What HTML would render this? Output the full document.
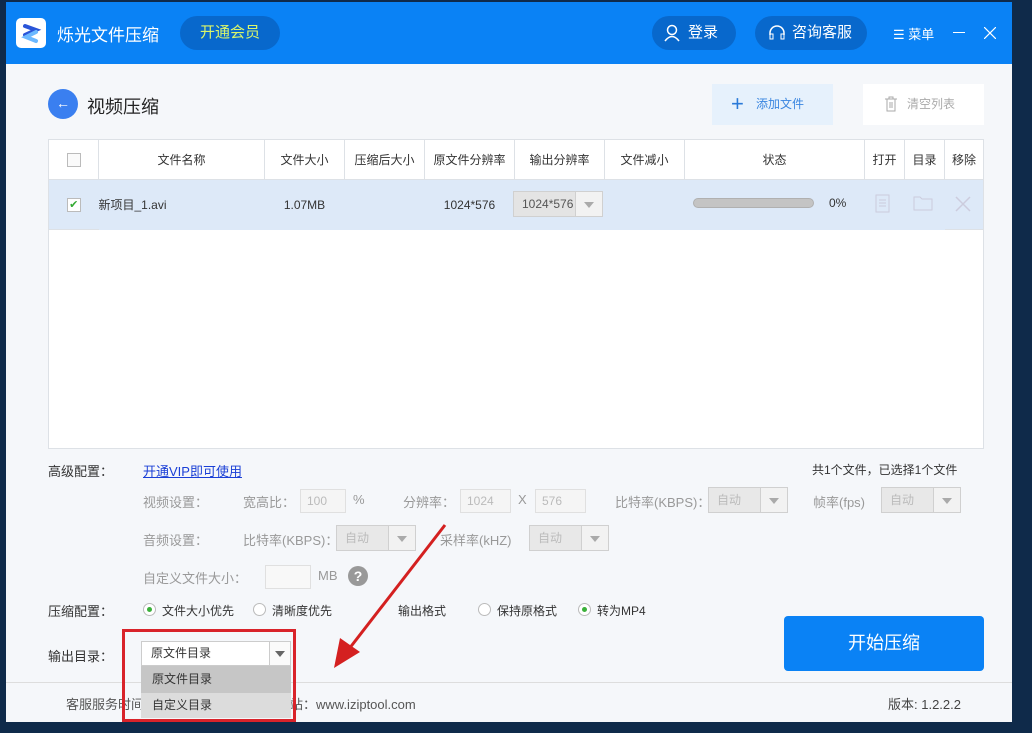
<!DOCTYPE html><html><head><meta charset="utf-8"><style>
*{box-sizing:border-box;margin:0;padding:0}
body{width:1032px;height:733px;overflow:hidden;background:#0f2a4a;font-family:"Liberation Sans","Noto Sans CJK SC",sans-serif;font-size:13px;color:#333;position:relative}
.a{position:absolute}
.win{left:6px;top:2px;width:1006px;height:720px;background:#f5f7fa}
.tb{left:6px;top:2px;width:1006px;height:62px;background:#0a82f5}
.pill{background:#0868cc;border-radius:17px;height:34px;color:#fff;font-size:15px;line-height:34px;text-align:center}
table{border-collapse:collapse;position:absolute;left:48px;top:139px;width:936px;background:#fff}
td{border:1px solid #dde1e6;text-align:center;font-size:12px;color:#333}
.g{color:#999}
.inp{border:1px solid #e0e0e0;background:#f5f5f5;height:24px;color:#bbb;font-size:12px;line-height:22px;padding-left:6px}
.sel{border:1px solid #d0d0d0;background:#e8e8e8;height:26px;color:#bbb;font-size:12px;line-height:24px;padding-left:8px}
.sel:after{content:"";position:absolute;right:0;top:0;width:26px;height:24px;border-left:1px solid #d0d0d0;background:#f2f2f2}
.sel i{position:absolute;right:8px;top:10px;border:5px solid transparent;border-top:6px solid #aaa;z-index:2}
.rad{width:13px;height:13px;border:1px solid #bbb;border-radius:50%;background:#fff}
.rad.on:after{content:"";position:absolute;left:3px;top:3px;width:5px;height:5px;border-radius:50%;background:#3ab03a}
</style></head><body>
<div class="a win"></div>
<div class="a tb"></div>
<div class="a" style="left:16px;top:18px;width:30px;height:30px;background:#fff;border-radius:5px"><svg width="30" height="30"><path d="M9 8 L20 12 L9 17" stroke="#2a55d8" stroke-width="4" fill="none" stroke-linecap="round"/><path d="M20 14 L10 19 L20 23" stroke="#6bb8ff" stroke-width="4" fill="none" stroke-linecap="round"/></svg></div>
<div class="a" style="left:57px;top:21px;color:#fff;font-size:17px">烁光文件压缩</div>
<div class="a pill" style="left:180px;top:16px;width:100px;color:#d9f56b">开通会员</div>
<div class="a pill" style="left:652px;top:16px;width:84px;padding-left:18px">登录</div>
<svg class="a" style="left:664px;top:24px" width="16" height="18"><circle cx="8" cy="6" r="4.5" stroke="#fff" stroke-width="1.5" fill="none"/><path d="M1 17 Q8 8 15 17" stroke="#fff" stroke-width="1.5" fill="none"/></svg>
<div class="a pill" style="left:755px;top:16px;width:112px;padding-left:22px">咨询客服</div>
<svg class="a" style="left:768px;top:24px" width="18" height="18"><path d="M2 11 V9 A7 7 0 0 1 16 9 V11" stroke="#fff" stroke-width="1.5" fill="none"/><rect x="2" y="10" width="3" height="5" fill="none" stroke="#fff"/><rect x="13" y="10" width="3" height="5" fill="none" stroke="#fff"/></svg>
<div class="a" style="left:893px;top:24px;color:#fff;font-size:13px">☰ 菜单</div>
<div class="a" style="left:953px;top:32px;width:12px;height:1px;background:#fff"></div>
<svg class="a" style="left:984px;top:27px" width="12" height="12"><path d="M0 0L12 12M12 0L0 12" stroke="#fff" stroke-width="1.2"/></svg>

<div class="a" style="left:48px;top:89px;width:30px;height:30px;border-radius:50%;background:#3a7ff0;color:#fff;text-align:center;line-height:29px;font-size:14px">←</div>
<div class="a" style="left:87px;top:93px;font-size:18px;color:#222">视频压缩</div>
<div class="a" style="left:712px;top:84px;width:121px;height:41px;background:#e6f1fc;color:#3a86e0;font-size:12px;line-height:41px;padding-left:44px">添加文件</div>
<div class="a" style="left:731px;top:94px;color:#2a7ad8;font-size:22px;line-height:20px">+</div>
<div class="a" style="left:863px;top:84px;width:121px;height:41px;background:#fff;color:#aaa;font-size:12px;line-height:41px;padding-left:44px">清空列表</div>
<svg class="a" style="left:884px;top:96px" width="14" height="16"><path d="M1 3H13M5 3V1H9V3M3 3V15H11V3M6 6V12M8 6V12" stroke="#aaa" fill="none"/></svg>

<table>
<tr style="height:40px"><td style="width:50px"><div style="width:14px;height:14px;border:1px solid #bbb;margin:auto;background:#fafafa"></div></td><td style="width:166px">文件名称</td><td style="width:80px">文件大小</td><td style="width:80px">压缩后大小</td><td style="width:90px">原文件分辨率</td><td style="width:90px">输出分辨率</td><td style="width:80px">文件减小</td><td style="width:180px">状态</td><td style="width:40px">打开</td><td style="width:40px">目录</td><td>移除</td></tr>
<tr style="height:50px;background:#dde9f8"><td style="border-right:none"><div style="width:14px;height:14px;border:1px solid #bbb;margin:auto;background:#fff;color:#3a3;font-size:11px;line-height:12px">✔</div></td><td style="border:none;text-align:left;padding-left:0">新项目_1.avi</td><td style="border:none">1.07MB</td><td style="border:none"></td><td style="border:none">1024*576</td><td style="border:none;position:relative"></td><td style="border:none"></td><td style="border:none"></td><td style="border:none"></td><td style="border:none"></td><td style="border-left:none"></td></tr>
<tr style="height:219px"><td colspan="11" style="border-top:none"></td></tr>
</table>
<div class="a sel" style="left:513px;top:191px;width:90px;color:#555;background:#e4e4e4">1024*576<i></i></div>
<div class="a" style="left:693px;top:198px;width:121px;height:10px;border-radius:5px;background:#c4c4c4;border:1px solid #b0b0b0"></div>
<div class="a" style="left:829px;top:196px;font-size:12px">0%</div>
<svg class="a" style="left:874px;top:194px" width="18" height="20"><rect x="2" y="1" width="13" height="17" fill="none" stroke="#ccd"/><path d="M5 6H12M5 9H12M5 12H12" stroke="#ccd"/></svg>
<svg class="a" style="left:913px;top:195px" width="20" height="16"><path d="M1 2H7L9 4H19V15H1Z" fill="none" stroke="#ccd"/></svg>
<svg class="a" style="left:955px;top:196px" width="16" height="16"><path d="M1 1L15 15M15 1L1 15" stroke="#ccd" stroke-width="1.5"/></svg>

<div class="a" style="left:48px;top:461px">高级配置：</div>
<div class="a" style="left:143px;top:461px;color:#1a3fd6;text-decoration:underline">开通VIP即可使用</div>
<div class="a" style="left:812px;top:461px;font-size:12px">共1个文件，已选择1个文件</div>
<div class="a g" style="left:143px;top:492px">视频设置：</div>
<div class="a g" style="left:243px;top:492px">宽高比：</div>
<div class="a inp" style="left:300px;top:489px;width:46px">100</div>
<div class="a g" style="left:353px;top:492px">%</div>
<div class="a g" style="left:403px;top:492px">分辨率：</div>
<div class="a inp" style="left:460px;top:489px;width:51px">1024</div>
<div class="a g" style="left:518px;top:492px">X</div>
<div class="a inp" style="left:535px;top:489px;width:51px">576</div>
<div class="a g" style="left:615px;top:492px">比特率(KBPS)：</div>
<div class="a sel" style="left:708px;top:487px;width:80px">自动<i></i></div>
<div class="a g" style="left:813px;top:492px">帧率(fps)</div>
<div class="a sel" style="left:881px;top:487px;width:80px">自动<i></i></div>
<div class="a g" style="left:143px;top:530px">音频设置：</div>
<div class="a g" style="left:243px;top:530px">比特率(KBPS)：</div>
<div class="a sel" style="left:336px;top:525px;width:80px">自动<i></i></div>
<div class="a g" style="left:440px;top:530px">采样率(kHZ)</div>
<div class="a sel" style="left:529px;top:525px;width:80px">自动<i></i></div>
<div class="a g" style="left:143px;top:568px">自定义文件大小：</div>
<div class="a inp" style="left:265px;top:565px;width:46px;background:#f8f8f8"></div>
<div class="a g" style="left:318px;top:568px">MB</div>
<div class="a" style="left:348px;top:566px;width:20px;height:20px;border-radius:50%;background:#999;color:#fff;text-align:center;line-height:20px;font-weight:bold;font-size:14px">?</div>

<div class="a" style="left:48px;top:601px">压缩配置：</div>
<div class="a rad on" style="left:143px;top:603px"></div><div class="a" style="left:162px;top:602px;font-size:12px">文件大小优先</div>
<div class="a rad" style="left:253px;top:603px"></div><div class="a" style="left:272px;top:602px;font-size:12px">清晰度优先</div>
<div class="a" style="left:398px;top:602px;font-size:12px">输出格式</div>
<div class="a rad" style="left:478px;top:603px"></div><div class="a" style="left:497px;top:602px;font-size:12px">保持原格式</div>
<div class="a rad on" style="left:578px;top:603px"></div><div class="a" style="left:597px;top:602px;font-size:12px">转为MP4</div>
<div class="a" style="left:784px;top:616px;width:200px;height:55px;background:#0a82f5;border-radius:4px;color:#fff;font-size:18px;text-align:center;line-height:55px">开始压缩</div>

<div class="a" style="left:48px;top:646px">输出目录：</div>
<div class="a" style="left:6px;top:682px;width:1006px;height:1px;background:#ddd"></div>
<div class="a" style="left:66px;top:694px;color:#555">客服服务时间</div>
<div class="a" style="left:290px;top:694px;color:#555">站：www.iziptool.com</div>
<div class="a" style="left:888px;top:694px;color:#444">版本: 1.2.2.2</div>

<div class="a" style="left:141px;top:641px;width:150px;height:25px;background:#fff;border:1px solid #ccc;font-size:12px;line-height:23px;padding-left:9px">原文件目录</div>
<div class="a" style="left:269px;top:641px;width:22px;height:25px;border:1px solid #ccc;background:#fafafa"></div>
<div class="a" style="left:275px;top:651px;border:5px solid transparent;border-top:6px solid #666"></div>
<div class="a" style="left:141px;top:666px;width:150px;height:27px;background:#c6c6c6;font-size:12px;line-height:27px;padding-left:11px">原文件目录</div>
<div class="a" style="left:141px;top:693px;width:150px;height:25px;background:#dcdcdc;font-size:12px;line-height:25px;padding-left:11px">自定义目录</div>
<div class="a" style="left:122px;top:629px;width:174px;height:93px;border:3px solid #d9232a"></div>
<svg class="a" style="left:330px;top:520px" width="130" height="150"><path d="M115 5 L12 138" stroke="#d42020" stroke-width="3"/><path d="M4 148 L10 118 L30 132 Z" fill="#d42020"/></svg>
</body></html>
